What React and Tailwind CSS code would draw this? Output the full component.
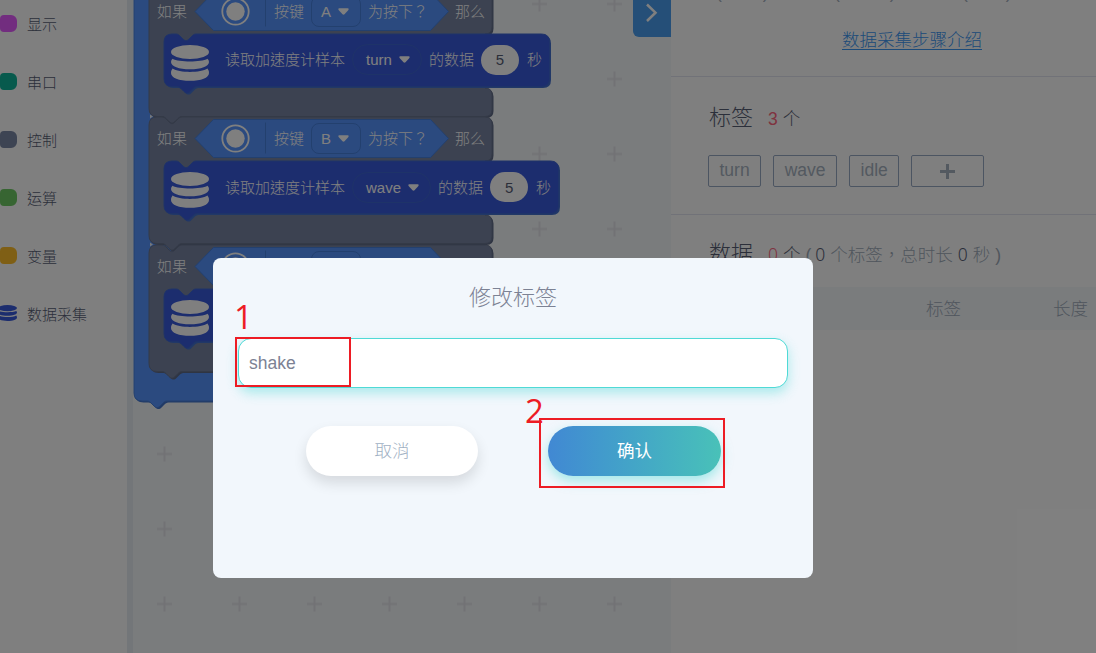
import React, { useState } from "react";

const categories = [
  { name: "显示", color: "bg-[#e45bff]" },
  { name: "串口", color: "bg-[#0fb49a]" },
  { name: "控制", color: "bg-[#7b88a6]" },
  { name: "运算", color: "bg-[#6fcb64]" },
  { name: "变量", color: "bg-[#ffbf2b]" },
  { name: "数据采集", icon: true },
];

const conditions = [
  { top: -10.5, button: "A", label: "turn", width: 386 },
  { top: 117, button: "B", label: "wave", width: 395 },
  { top: 244.5, button: "C", label: "idle", width: 380 },
];

const tags = ["turn", "wave", "idle"];

// puzzle connector, 20px wide
const NOTCH = "c2 0 3 1 4 2 l3 3 c1 1 2 1.6 3 1.6 s2 -.6 3 -1.6 l3 -3 c1 -1 2 -2 4 -2";
const NOTCH_BACK = "c-2 0 -3 1 -4 2 l-3 3 c-1 1 -2 1.6 -3 1.6 s-2 -.6 -3 -1.6 l-3 -3 c-1 -1 -2 -2 -4 -2";

function DataIcon({ className }) {
  return (
    <svg className={className} viewBox="0 0 38 36" preserveAspectRatio="none" fill="currentColor">
      <ellipse cx="19" cy="7" rx="19" ry="7" />
      <path d="M1.5 13.7C8 17.3 30 17.3 36.5 13.7Q38 15 38 17C38 21.5 30 24.3 19 24.3S0 21.5 0 17Q0 15 1.5 13.7Z" />
      <path d="M1.5 23.5C8 28 30 28 36.5 23.5Q38 25.5 38 28C38 33 30 35.8 19 35.8S0 33 0 28Q0 25.5 1.5 23.5Z" />
    </svg>
  );
}

function Caret() {
  return (
    <svg className="h-[7px] w-[11px] shrink-0" viewBox="0 0 11 7" fill="currentColor">
      <path d="M1.3 0.3h8.4q1.5 .3 .7 1.6L6.5 6.2q-1 .9-2 0L.6 1.9Q-.2 .6 1.3 .3Z" />
    </svg>
  );
}

function Block({ d, fill, shade, line }) {
  return (
    <>
      <path d={d} fill={shade} transform="translate(1.5 1.5)" />
      <path d={d} fill={fill} stroke={line} strokeWidth="1" />
    </>
  );
}

function Condition({ top, button, label, width }) {
  const gray = `M0 8 q0 -8 8 -8 h5 ${NOTCH} H336 q7 0 7 7 V37 q0 7 -7 7 V98 q7 0 7 7 V119.500 q0 7 -7 7 H33 ${NOTCH_BACK} h-5 q-8 0 -8 -8 Z`;
  const blue = `M15 52 q0 -8 8 -8 h4 ${NOTCH} H${15 + width - 8.5} q8 0 8 8 V88.500 q0 8 -8 8 H48 ${NOTCH_BACK} h-5 q-8 0 -8 -8 Z`;
  return (
    <div className="absolute left-[16px] h-[127px] w-[430px] text-[15px] leading-none text-white" style={{ top }}>
      <svg className="absolute inset-0 overflow-visible" width="430" height="127">
        <Block d={gray} fill="#7885a2" shade="#5f6a86" line="#69748f" />
        <path d="M46 21.500 L64.500 2.500 H281.500 L299.500 21.500 L281.500 40.500 H64.500 Z" fill="#5694ff" stroke="#4680dd" strokeWidth="1" />
        <path d="M116.500 5.500 V36.500" stroke="#4680dd" />
        <Block d={blue} fill="#395adc" shade="#4370cf" line="#3d66d2" />
        <path d="M1 -2.500 L4 -.5 L1 1.500 Z" fill="#e8ecf5" />
      </svg>
      <div className="relative flex h-[43px] items-center pl-2">
        <span>如果</span>
        <svg className="ml-[34px] h-[29px] w-[29px]" viewBox="0 0 29 29">
          <circle cx="14.500" cy="14.500" r="13.200" fill="none" stroke="#fff" strokeWidth="1.800" />
          <circle cx="14.500" cy="14.500" r="9.200" fill="#fff" />
        </svg>
        <span className="ml-[24px]">按键</span>
        <span className="ml-[7px] flex h-[31px] w-[50px] items-center gap-[7px] rounded-lg border border-[#4680dd] pl-[9px]">
          <span className="w-[10px]">{button}</span>
          <Caret />
        </span>
        <span className="ml-[7px]">为按下？</span>
        <span className="ml-[27px]">那么</span>
      </div>
      <div className="relative flex h-[54px] items-center pl-[22px]">
        <DataIcon className="mt-[6px] h-[36px] w-[38px]" />
        <span className="ml-[16px]">读取加速度计样本</span>
        <span className="ml-[7px] flex h-[31px] items-center gap-[7px] rounded-full border border-[#3d66d2] pl-[13px] pr-[11px]">
          <span>{label}</span>
          <Caret />
        </span>
        <span className="ml-[7px]">的数据</span>
        <span className="ml-[7px] flex h-[30px] w-[38px] items-center justify-center rounded-full bg-white text-[#575e75]">5</span>
        <span className="ml-[8px]">秒</span>
      </div>
    </div>
  );
}

function Sidebar() {
  return (
    <aside className="flex w-[127px] shrink-0 flex-col bg-white pt-[9px]">
      {categories.map((c) => (
        <div key={c.name} className="mb-[28px] flex h-[30px] items-center text-[15px] text-[#575e75]">
          {c.icon ? (
            <DataIcon className="-ml-[2px] mt-[-2px] h-[16px] w-[19px] text-[#395adc]" />
          ) : (
            <span className={`mt-[-1px] h-[17px] w-[17px] rounded-r-md rounded-l ${c.color}`} />
          )}
          <span className="ml-[10px] pt-[2px]">{c.name}</span>
        </div>
      ))}
    </aside>
  );
}

function Workspace() {
  const loop = "M0 -20 H70 V368 H340 q7 0 7 7 V393.500 q0 7 -7 7 H33 " + NOTCH_BACK + " h-5 q-8 0 -8 -8 Z";
  return (
    <main className="relative w-[538px] shrink-0 overflow-hidden bg-[#f5f8fb]">
      <svg className="absolute inset-0 h-full w-full">
        <defs>
          <pattern id="grid" x="-6" y="-33.500" width="75" height="75" patternUnits="userSpaceOnUse">
            <path d="M30 37.500H45M37.500 30V45" stroke="#e4e5ea" strokeWidth="2" />
          </pattern>
        </defs>
        <rect width="100%" height="100%" fill="url(#grid)" />
        <g transform="translate(1 0.500)">
          <Block d={loop} fill="#5694ff" shade="#4274cc" line="#4680dd" />
        </g>
      </svg>
      {conditions.map((c) => (
        <Condition key={c.button} {...c} />
      ))}
      <button className="absolute right-0 top-0 flex h-[37px] w-[38px] items-start justify-center rounded-bl-md bg-[#4a9ff0] pt-[3px]">
        <svg className="h-[20px] w-[14px]" viewBox="0 0 14 20" fill="none" stroke="#fff" strokeWidth="2.500">
          <path d="M2 1.500L10.500 9.700L2 18" />
        </svg>
      </button>
    </main>
  );
}

function DataPanel() {
  return (
    <section className="flex min-w-0 flex-1 flex-col bg-white text-[17.5px] text-[#575e75]">
      <div className="flex h-[77px] shrink-0 flex-col items-center overflow-hidden border-b border-[#e3e5f0]">
        <div className="flex h-[5px] w-full items-end pl-[45px] text-[#a5b0bd]">
          <span className="flex w-[118px] gap-[41px]"><i className="not-italic">(</i><i className="not-italic">)</i></span>
          <span className="flex w-[128px] gap-[50px]"><i className="not-italic">(</i><i className="not-italic">)</i></span>
          <span className="flex gap-[38px]"><i className="not-italic">(</i><i className="not-italic">)</i></span>
        </div>
        <a href="#guide" className="mt-[22px] pl-[57px] text-[#3a96f2]">
          <span className="underline underline-offset-[3px]">数据采集步骤介绍</span>
        </a>
      </div>
      <div className="h-[138px] shrink-0 border-b border-[#e3e5f0] pl-[37px] pt-[24px]">
        <div className="flex h-[36px] items-baseline pl-px">
          <h3 className="text-[22px]">标签</h3>
          <span className="ml-[15px] text-[#ff6680]">3</span>
          <span className="ml-[5px]">个</span>
        </div>
        <div className="mt-[18px] flex gap-3 text-[#a7b3c1]">
          {tags.map((tag) => (
            <span key={tag} className="flex h-[32px] items-center rounded-xs border border-[#99abc4] px-[10.5px] pb-[2px]">
              {tag}
            </span>
          ))}
          <span className="flex h-[32px] w-[73px] items-center justify-center rounded-xs border border-[#99abc4]">
            <svg className="h-[15px] w-[15px]" viewBox="0 0 15 15" stroke="#a7b3c1" strokeWidth="3">
              <path d="M0 7.500H15M7.500 0V15" />
            </svg>
          </span>
        </div>
      </div>
      <div className="flex h-[72px] shrink-0 items-baseline whitespace-pre pl-[38px] pt-[22px] text-[#a0acba]">
        <h3 className="text-[22px] text-[#575e75]">数据</h3>
        <span className="ml-[15px] font-['Noto_Sans'] text-[#ff6680]">0</span>
        <span className="ml-[5px] text-[#575e75]">个</span>
        <span className="ml-[5px]">(</span>
        <span className="ml-[4px] font-['Noto_Sans'] text-[#575e75]">0</span>
        <span className="ml-[5px]">个标签，总时长</span>
        <span className="ml-[5px] font-['Noto_Sans'] text-[#575e75]">0</span>
        <span className="ml-[5px]">秒</span>
        <span className="ml-[5px]">)</span>
      </div>
      <div className="flex h-[43px] shrink-0 items-center bg-[#f4f8fb] pl-[255px] pt-px text-[#a0acba]">
        <span className="w-[127px]">标签</span>
        <span>长度</span>
      </div>
    </section>
  );
}

function RenameDialog() {
  const [value, setValue] = useState("shake");
  return (
    <div className="absolute left-[213px] top-[258px] h-[320px] w-[600px] rounded-lg bg-[#f2f7fc] px-[25px]">
      <h2 className="flex h-[80px] items-center justify-center pb-[2px] text-[22px] text-[#7c8294]">修改标签</h2>
      <input
        value={value}
        onChange={(e) => setValue(e.target.value)}
        className="block h-[50px] w-[550px] rounded-[13px] border border-[#4fdad6] bg-white px-[10px] text-[17.5px] text-[#7c8294] shadow-[0_5px_12px_rgba(79,218,214,0.45)] outline-none"
      />
      <div className="mt-[38px] flex gap-[70px] pl-[68px] text-[17.5px]">
        <button className="h-[50px] w-[172px] rounded-full bg-white text-[#9fb0c3] shadow-[0_7px_14px_rgba(0,0,0,0.12)]">取消</button>
        <button className="h-[50px] w-[173px] rounded-full bg-gradient-to-r from-[#4188d3] to-[#49c1b8] font-normal text-white shadow-[0_5px_12px_rgba(79,218,214,0.5)]">
          确认
        </button>
      </div>

      {/* Step markers */}
      <div className="pointer-events-none absolute left-[22px] top-[79px] h-[50px] w-[116px] border-2 border-[#ed1c24]" />
      <div className="pointer-events-none absolute left-[326px] top-[160px] h-[70px] w-[186px] border-2 border-[#ed1c24]" />
      <span className="absolute left-[21px] top-[42px] font-['Open_Sans'] text-[33px] leading-[34px] font-normal text-[#ed1c24]">1</span>
      <span className="absolute left-[312px] top-[136px] font-['Open_Sans'] text-[33px] leading-[34px] font-normal text-[#ed1c24]">2</span>
    </div>
  );
}

export default function App() {
  return (
    <div className="relative flex h-[653px] w-[1096px] overflow-hidden font-['Liberation_Sans','Noto_Sans_CJK_TC',sans-serif] font-light">
      <Sidebar />
      <div className="w-[6px] shrink-0 bg-[#e6ecf2]" />
      <div className="flex min-w-0 flex-1">
        <Workspace />
        <DataPanel />
      </div>
      <div className="absolute inset-0 bg-black/50" />
      <RenameDialog />
    </div>
  );
}
